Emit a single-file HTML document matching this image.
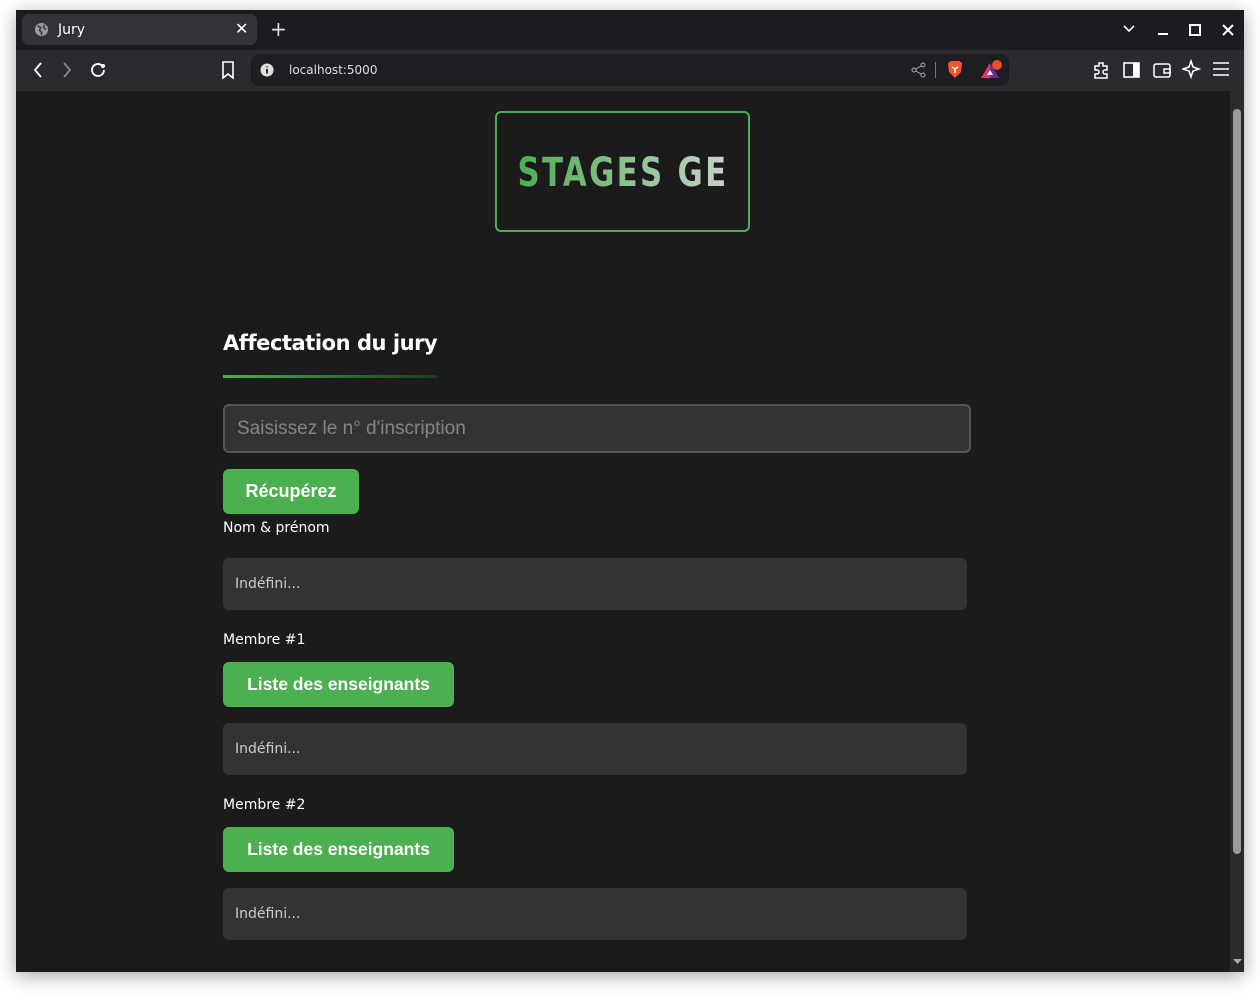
<!DOCTYPE html>
<html><head><meta charset="utf-8"><style>
*{box-sizing:border-box;margin:0;padding:0}
body{width:1260px;height:1004px;background:#fff;position:relative;overflow:hidden;font-family:"DejaVu Sans",sans-serif}
.win{position:absolute;left:16px;top:10px;width:1228px;height:962px;background:#1b1b1b;box-shadow:0 4px 18px rgba(0,0,0,.35);overflow:hidden}
.tabbar{position:absolute;left:0;top:0;width:100%;height:40px;background:#1c1b1f}
.tab{position:absolute;left:6px;top:4px;width:235px;height:31px;background:#333238;border-radius:7px;color:#fff;font-size:14px}
.toolbar{position:absolute;left:0;top:40px;width:100%;height:41px;background:#2b2a2f}
.url{position:absolute;left:235px;top:4px;width:758px;height:32px;background:#1e1d21;border-radius:8px}
.abs{position:absolute}
.page{position:absolute;left:0;top:81px;width:1214px;height:881px;background:#1b1b1b}
.sb{position:absolute;left:1214px;top:81px;width:14px;height:881px;background:#2a2a2a}
.thumb{position:absolute;left:3px;top:18px;width:8px;height:745px;background:#9a9a9a;border-radius:4px}
.logo{position:absolute;left:479px;top:20px;width:255px;height:121px;border:2px solid #4caf50;border-radius:6px;display:flex;justify-content:center;align-items:center;font-size:40px;font-weight:bold;letter-spacing:3px;white-space:nowrap}
.logo span{flex:none;display:inline-block;transform:scaleX(0.77);background:linear-gradient(90deg,#4caf50,#c8d2c8);-webkit-background-clip:text;background-clip:text;color:transparent;margin-top:2px}
h1{position:absolute;left:207px;top:240px;font-size:21px;letter-spacing:-0.45px;font-weight:bold;color:#fff;white-space:nowrap}
.ul{position:absolute;left:207px;top:284px;width:214px;height:3px;background:linear-gradient(90deg,#4caf50,#1d3a1e)}
.inp{position:absolute;left:207px;top:313px;width:748px;height:49px;background:#333;border:2px solid #555;border-radius:6px;color:#858585;font:19px "Liberation Sans",sans-serif;padding:12px 12px}
.btn{position:absolute;left:207px;height:45px;background:#4caf50;border-radius:6px;color:#fff;font:bold 18px "Liberation Sans",sans-serif;text-align:center;line-height:45px}
.lab{position:absolute;left:207px;color:#fff;font-size:14px}
.box{position:absolute;left:207px;width:744px;height:52px;background:#333;border-radius:6px;color:#ccc;font-size:14px;line-height:52px;padding-left:12px}
svg{position:absolute}
</style></head><body>
<div class="win">
<div class="tabbar">
 <div class="tab">
  <svg style="left:12px;top:8px" width="15" height="15" viewBox="0 0 16 16"><circle cx="8" cy="8" r="7" fill="#9a9a9e"/><path d="M4 4l3 2-1 3 2 2v3M11 3l-1 3 3 2" stroke="#333238" stroke-width="1.6" fill="none"/></svg>
  <span class="abs" style="left:36px;top:8px">Jury</span>
  <span class="abs" style="left:213px;top:5px;font-size:16px">✕</span>
 </div>
 <span class="abs" style="left:254px;top:7px;color:#ddd;font-size:20px">+</span>
 <svg style="left:1107px;top:14px" width="12" height="10"><path d="M1 2l5 5 5-5" stroke="#fff" stroke-width="1.6" fill="none"/></svg>
 <svg style="left:1141px;top:14px" width="12" height="12"><path d="M1 10h10" stroke="#fff" stroke-width="2"/></svg>
 <svg style="left:1173px;top:14px" width="12" height="12"><rect x="1" y="1" width="10" height="10" stroke="#fff" stroke-width="2" fill="none"/></svg>
 <svg style="left:1206px;top:14px" width="12" height="12"><path d="M1 1l10 10M11 1L1 11" stroke="#fff" stroke-width="2"/></svg>
</div>
<div class="toolbar">
 <svg style="left:16px;top:11px" width="12" height="18"><path d="M9 2L3 9l6 7" stroke="#fff" stroke-width="1.8" fill="none"/></svg>
 <svg style="left:45px;top:11px" width="12" height="18"><path d="M3 2l6 7-6 7" stroke="#888" stroke-width="1.8" fill="none"/></svg>
 <svg style="left:72px;top:10px" width="20" height="20"><path d="M16 10a6 6 0 1 1-2-4.5" stroke="#fff" stroke-width="1.8" fill="none"/><circle cx="15" cy="6" r="2" fill="#fff"/></svg>
 <svg style="left:204px;top:10px" width="16" height="20"><path d="M3 2h10v16l-5-4-5 4z" stroke="#fff" stroke-width="1.6" fill="none"/></svg>
 <div class="url">
  <svg style="left:9px;top:9px" width="14" height="14"><circle cx="7" cy="7" r="6.5" fill="#ddd"/><path d="M7 6v4.5M7 3.5v1" stroke="#1e1d21" stroke-width="1.8"/></svg>
  <span class="abs" style="left:38px;top:9px;color:#dde;font-size:12px">localhost:5000</span>
  <svg style="left:660px;top:8px" width="16" height="16"><circle cx="12" cy="3" r="2" stroke="#aaa" fill="none"/><circle cx="3" cy="8" r="2" stroke="#aaa" fill="none"/><circle cx="12" cy="13" r="2" stroke="#aaa" fill="none"/><path d="M5 7l5-3M5 9l5 3" stroke="#aaa"/></svg>
  <div class="abs" style="left:684px;top:8px;width:1px;height:16px;background:#777"></div>
  <svg style="left:695px;top:6px" width="18" height="20"><path d="M2 3l3-2h8l3 2-1 9-6 6-6-6z" fill="#fb542b"/><path d="M6 7l3 2 3-2M9 9v4" stroke="#fff" stroke-width="1.4" fill="none"/></svg>
  <svg style="left:728px;top:6px" width="24" height="20"><path d="M11 3L2 18h18z" fill="#e0356c"/><path d="M11 3l9 15H11z" fill="#662d91"/><path d="M11 10l-3 5h6z" fill="#fff"/><circle cx="18" cy="5" r="5" fill="#f04a28"/></svg>
 </div>
 <svg style="left:1076px;top:10px" width="20" height="20"><path d="M7 3h4v3h4v4h-2a2 2 0 0 0 0 4h2v4H3v-4h2a2 2 0 0 0 0-4H3V6h4z" stroke="#fff" stroke-width="1.5" fill="none"/></svg>
 <svg style="left:1106px;top:10px" width="20" height="20"><rect x="2" y="3" width="15" height="14" stroke="#fff" stroke-width="1.6" fill="none"/><rect x="11" y="3" width="6" height="14" fill="#fff"/></svg>
 <svg style="left:1136px;top:10px" width="20" height="20"><rect x="2" y="4" width="16" height="13" rx="2" stroke="#fff" stroke-width="1.5" fill="none"/><path d="M12 9h6v4h-6z" stroke="#fff" stroke-width="1.5" fill="none"/></svg>
 <svg style="left:1166px;top:9px" width="20" height="20"><path d="M9 2l2 6 6 2-6 2-2 6-2-6-6-2 6-2z" stroke="#fff" stroke-width="1.5" fill="none"/></svg>
 <svg style="left:1196px;top:11px" width="18" height="16"><path d="M1 2h16M1 8h16M1 14h16" stroke="#fff" stroke-width="1.6"/></svg>
</div>
<div class="page">
 <div class="logo"><span>STAGES GE</span></div>
 <h1>Affectation du jury</h1>
 <div class="ul"></div>
 <div class="inp">Saisissez le n° d'inscription</div>
 <div class="btn" style="top:378px;width:136px">Récupérez</div>
 <div class="lab" style="top:429px">Nom &amp; prénom</div>
 <div class="box" style="top:467px">Indéfini...</div>
 <div class="lab" style="top:541px">Membre #1</div>
 <div class="btn" style="top:571px;width:231px;font-size:17.5px">Liste des enseignants</div>
 <div class="box" style="top:632px">Indéfini...</div>
 <div class="lab" style="top:706px">Membre #2</div>
 <div class="btn" style="top:736px;width:231px;font-size:17.5px">Liste des enseignants</div>
 <div class="box" style="top:797px">Indéfini...</div>
</div>
<div class="sb"><div class="thumb"></div>
 <svg style="left:3px;top:868px" width="9" height="6"><path d="M0 0h9L4.5 5z" fill="#aaa"/></svg></div>
</div>
</body></html>
